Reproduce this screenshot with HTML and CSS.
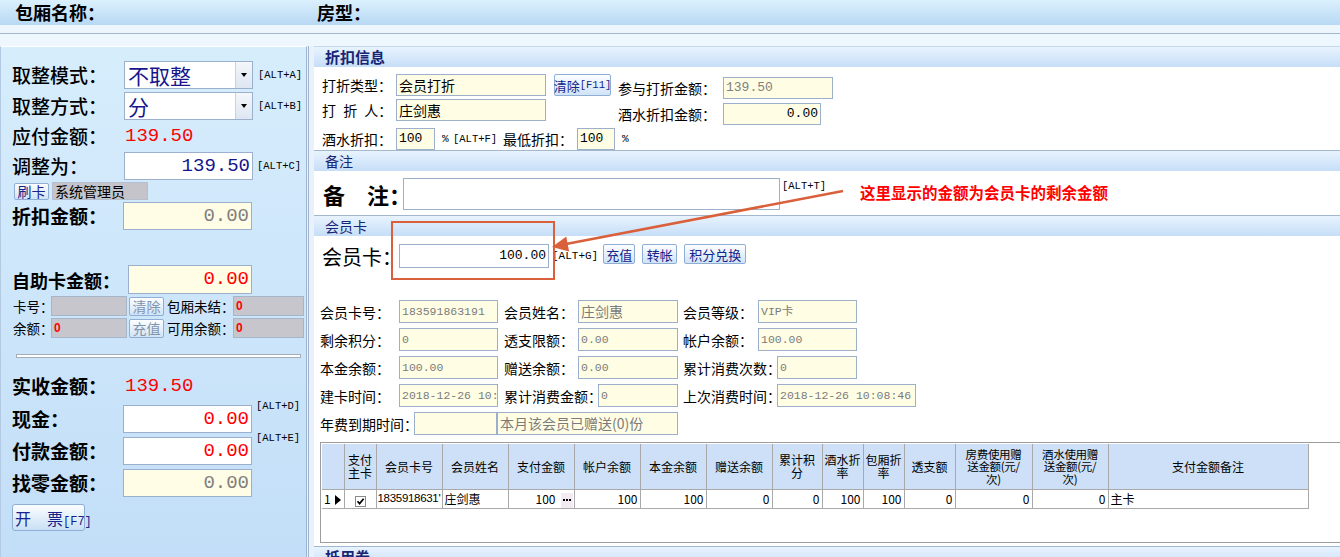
FILE: index.html
```html
<!DOCTYPE html>
<html lang="zh-CN">
<head>
<meta charset="utf-8">
<title>结账</title>
<link rel="stylesheet" href="styles.css">
</head>
<body>
<div class="app">
  <header class="titlebar">
    <span class="tt room-name">包厢名称：</span>
    <span class="tt room-type">房型：</span>
  </header>
  <div class="strip-a"></div>
  <div class="strip-b"></div>
  <div class="main">
    <aside class="left">
      <div class="lrow r1">
        <span class="lab med">取整模式：</span>
        <div class="sel"><span class="sel-val">不取整</span><span class="sel-btn"><i class="tri"></i></span></div>
        <span class="alt">[ALT+A]</span>
      </div>
      <div class="lrow r2">
        <span class="lab med">取整方式：</span>
        <div class="sel"><span class="sel-val">分</span><span class="sel-btn"><i class="tri"></i></span></div>
        <span class="alt">[ALT+B]</span>
      </div>
      <div class="lrow r3">
        <span class="lab med">应付金额：</span>
        <span class="num red val">139.50</span>
      </div>
      <div class="lrow r4">
        <span class="lab med">调整为：</span>
        <div class="bigin navy">139.50</div>
        <span class="alt alt-c">[ALT+C]</span>
      </div>
      <div class="lrow r5">
        <span class="btn swipe">刷卡</span>
        <span class="graybox op">系统管理员</span>
      </div>
      <div class="lrow r6">
        <span class="lab b w122">折扣金额：</span>
        <div class="bigin yel">0.00</div>
      </div>
      <div class="lrow r7">
        <span class="lab b w127 sm">自助卡金额：</span>
        <div class="bigin yel red w124">0.00</div>
      </div>
      <div class="lrow r8">
        <span class="slab w38">卡号：</span>
        <span class="gbox"></span>
        <span class="btn dim">清除</span>
        <span class="slab w66">包厢未结：</span>
        <span class="gbox w70"><b class="rz">0</b></span>
      </div>
      <div class="lrow r9">
        <span class="slab w38">余额：</span>
        <span class="gbox"><b class="rz">0</b></span>
        <span class="btn dim">充值</span>
        <span class="slab w66">可用余额：</span>
        <span class="gbox w70"><b class="rz">0</b></span>
      </div>
      <div class="sep"></div>
      <div class="lrow r10">
        <span class="lab b">实收金额：</span>
        <span class="num red val">139.50</span>
      </div>
      <div class="lrow r11">
        <span class="lab b w122">现金：</span>
        <div class="bigin red">0.00</div>
        <span class="alt alt-up">[ALT+D]</span>
      </div>
      <div class="lrow r12">
        <span class="lab b w122">付款金额：</span>
        <div class="bigin red">0.00</div>
        <span class="alt alt-up">[ALT+E]</span>
      </div>
      <div class="lrow r13">
        <span class="lab b w122">找零金额：</span>
        <div class="bigin yel">0.00</div>
      </div>
      <div class="lrow r14">
        <span class="btn invoice"><span class="inv-cn">开　票</span><span class="inv-k">[F7]</span></span>
      </div>
    </aside>
    <div class="divider"></div>
    <section class="right">
      <div class="sh b">折扣信息</div>
      <div class="sb1">
        <div class="disc-top">
          <div class="disc-left">
            <div class="drow">
              <span class="rl w74">打折类型：</span>
              <span class="f w150">会员打折</span>
              <span class="btn clr">清除<span class="k">[F11]</span></span>
            </div>
            <div class="drow">
              <span class="rl w74 spaced">打 折 人：</span>
              <span class="f w150">庄剑惠</span>
            </div>
          </div>
          <div class="disc-right">
            <div class="drow">
              <span class="rl w105">参与打折金额：</span>
              <span class="f w110 gray mono13">139.50</span>
            </div>
            <div class="drow">
              <span class="rl w105">酒水折扣金额：</span>
              <span class="f w98 ra mono13">0.00</span>
            </div>
          </div>
        </div>
        <div class="drow row3">
          <span class="rl w74">酒水折扣：</span>
          <span class="f w39 mono13">100</span>
          <span class="pct">%</span>
          <span class="alt w50 altf">[ALT+F]</span>
          <span class="rl w74">最低折扣：</span>
          <span class="f w38 mono13">100</span>
          <span class="pct">%</span>
        </div>
      </div>
      <div class="sh">备注</div>
      <div class="sb2">
        <span class="memo-l">备　注：</span>
        <span class="memo-f"></span>
        <span class="alt alt-t">[ALT+T]</span>
      </div>
      <div class="sh">会员卡</div>
      <div class="sb3">
        <div class="card-row">
          <span class="card-l">会员卡：</span>
          <span class="card-f">100.00</span>
          <span class="alt alt-g">[ALT+G]</span>
          <span class="btn cb1">充值</span>
          <span class="btn cb2">转帐</span>
          <span class="btn cb3">积分兑换</span>
        </div>
        <div class="mi">
          <div class="mrow">
            <span class="ml w79">会员卡号：</span><span class="mf w99 mono">183591863191</span>
            <span class="ml w74 ml6">会员姓名：</span><span class="mf w100 cn">庄剑惠</span>
            <span class="ml w75 ml5">会员等级：</span><span class="mf w99 mono">VIP卡</span>
          </div>
          <div class="mrow">
            <span class="ml w79">剩余积分：</span><span class="mf w99 mono">0</span>
            <span class="ml w74 ml6">透支限额：</span><span class="mf w100 mono">0.00</span>
            <span class="ml w75 ml5">帐户余额：</span><span class="mf w99 mono">100.00</span>
          </div>
          <div class="mrow">
            <span class="ml w79">本金余额：</span><span class="mf w99 mono">100.00</span>
            <span class="ml w74 ml6">赠送余额：</span><span class="mf w100 mono">0.00</span>
            <span class="ml w94 ml5">累计消费次数：</span><span class="mf w80 mono">0</span>
          </div>
          <div class="mrow">
            <span class="ml w79">建卡时间：</span><span class="mf w99 mono">2018-12-26 10:</span>
            <span class="ml w94 ml6">累计消费金额：</span><span class="mf w80 mono">0</span>
            <span class="ml w94 ml5">上次消费时间：</span><span class="mf w139 mono">2018-12-26 10:08:46</span>
          </div>
          <div class="mrow">
            <span class="ml w94">年费到期时间：</span><span class="mf w83"></span><span class="mf w181 cn">本月该会员已赠送(0)份</span>
          </div>
        </div>
        <div class="grid">
          <table class="gt">
            <colgroup>
              <col class="c22"><col class="c32"><col class="c66"><col class="c66"><col class="c66"><col class="c66"><col class="c66"><col class="c66"><col class="c50"><col class="c41"><col class="c41"><col class="c51"><col class="c77"><col class="c76"><col class="c200">
            </colgroup>
            <tr class="gh">
              <th></th><th>支付<br>主卡</th><th>会员卡号</th><th>会员姓名</th><th>支付金额</th><th>帐户余额</th><th>本金余额</th><th>赠送余额</th><th>累计积<br>分</th><th>酒水折<br>率</th><th>包厢折<br>率</th><th>透支额</th><th class="tight">房费使用赠<br>送金额(元/<br>次)</th><th class="tight">酒水使用赠<br>送金额(元/<br>次)</th><th>支付金额备注</th>
            </tr>
            <tr class="gd">
              <td class="rh">1<i class="ptr"></i></td>
              <td class="cc"><span class="chk"><svg width="9" height="9" viewBox="0 0 9 9"><path d="M1.5 4.2 L3.6 6.6 L7.6 1.8" fill="none" stroke="#000" stroke-width="1.7"/></svg></span></td>
              <td class="cardno">1835918631'</td>
              <td>庄剑惠</td>
              <td class="n pay">100<span class="dots"><i></i><i></i><i></i></span></td>
              <td class="n">100</td>
              <td class="n">100</td>
              <td class="n">0</td>
              <td class="n">0</td>
              <td class="n">100</td>
              <td class="n">100</td>
              <td class="n">0</td>
              <td class="n">0</td>
              <td class="n">0</td>
              <td>主卡</td>
            </tr>
          </table>
        </div>
      </div>
      <div class="sh b">抵用券</div>
    </section>
  </div>
  <div class="overlay">
    <svg class="anno" width="1340" height="557" viewBox="0 0 1340 557">
      <rect x="392" y="222" width="162" height="57" fill="none" stroke="#d9603b" stroke-width="2"/>
      <line x1="843" y1="191" x2="566" y2="244" stroke="#d9603b" stroke-width="2.5"/>
      <polygon points="552,247 569.1,251.4 566.3,236.6" fill="#d9603b"/>
    </svg>
    <div class="note">这里显示的金额为会员卡的剩余金额</div>
  </div>
</div>
</body>
</html>
```

FILE: styles.css
```css
* { box-sizing: border-box; }
html, body { margin: 0; padding: 0; }
body {
  width: 1340px; height: 557px; overflow: hidden;
  font-family: "Noto Sans CJK SC", "Noto Sans", sans-serif;
  color: #000; background: #eef6fe;
}
.app { position: relative; width: 1340px; height: 557px; overflow: hidden; display: flex; flex-direction: column; }

/* title */
.titlebar { height: 25px; flex: none; display: flex; align-items: center; background: linear-gradient(#dbf0fd, #b8d8f4); }
.tt { font-size: 18px; font-weight: 700; line-height: 22px; white-space: nowrap; margin-top: -2px; }
.room-name { width: 317px; padding-left: 15px; flex: none; }
.strip-a { height: 9px; flex: none; background: #edf5fd; border-bottom: 1px solid #a3b7cf; }
.strip-b { height: 12px; flex: none; background: #eef6fe; }

.main { flex: 1; display: flex; min-height: 0; }

/* left panel */
.left {
  width: 307px; flex: none;
  border-left: 1px solid #b4c9e2; border-right: 1px solid #9fb4cf; border-top: 1px solid #fff;
  background: linear-gradient(#d6edfc, #c3def8);
  display: flex; flex-direction: column;
}
.divider { width: 7px; flex: none; background: linear-gradient(to right, #eaf3fd 0, #eaf3fd 1px, #9fb4cf 1px, #9fb4cf 2px, #e9f2fc 2px); }

.lrow { display: flex; align-items: center; flex: none; height: 28px; }
.r1 { margin-top: 14px; }
.r2 { margin-top: 3px; }
.r3 { margin-top: 2px; }
.r4 { margin-top: 2px; }
.r5 { margin-top: 2px; height: 18px; }
.r6 { margin-top: 2px; }
.r7 { margin-top: 35px; height: 29px; }
.r8 { margin-top: 2px; height: 20px; }
.r9 { margin-top: 2px; height: 20px; }
.r10 { margin-top: 14px; }
.r11 { margin-top: 5px; }
.r12 { margin-top: 4px; }
.r13 { margin-top: 4px; }
.r14 { margin-top: 7px; height: 27px; }

.lab { flex: none; width: 123px; padding-left: 11px; font-size: 19px; white-space: nowrap; line-height: 24px; }
.lab.med { font-weight: 500; }
.lab.b { font-weight: 700; }
.lab.sm { font-size: 18px; }
.lab.w122 { width: 122px; }
.lab.w127 { width: 127px; }

.sel { width: 129px; height: 28px; border: 1px solid #9ab0cc; background: #fff; display: flex; flex: none; }
.sel-val { flex: 1; font-size: 21px; color: #17168c; padding-left: 3px; line-height: 26px; }
.sel-btn { width: 17px; border-left: 1px solid #c4d2e3; background: linear-gradient(#f4f7fb, #dde6f2); display: flex; align-items: center; justify-content: center; }
.tri { display: block; width: 0; height: 0; border-left: 3.5px solid transparent; border-right: 3.5px solid transparent; border-top: 4px solid #000; }

.alt { font-family: "Liberation Mono", monospace; font-size: 10.5px; margin-left: 5px; white-space: nowrap; flex: none; line-height: 12px; }
.alt-c { margin-left: 4px; }
.alt-up { align-self: flex-start; margin-top: -5px; margin-left: 4px; }

.num { font-family: "Liberation Mono", monospace; font-size: 19px; }
.red { color: #f00; }
.val { margin-left: 1px; }

.bigin {
  flex: none; width: 129px; height: 28px; border: 1px solid #9ab0cc; background: #fff;
  font-family: "Liberation Mono", monospace; font-size: 19px; line-height: 26px;
  text-align: right; padding-right: 2px; color: #14148c;
}
.bigin.yel { background: #fffde6; color: #7f7f7f; }
.bigin.red { color: #f00; }
.bigin.w124 { width: 124px; height: 29px; }

.btn {
  flex: none; display: flex; align-items: center; justify-content: center; white-space: nowrap;
  border: 1px solid #8eaed3; border-radius: 2px;
  background: linear-gradient(#fdfeff, #d0e3f7); color: #16238c; font-size: 13px;
}
.swipe { margin-left: 13px; width: 35px; height: 17px; font-size: 14px; }
.graybox { flex: none; background: #c4c4ca; border: 1px solid #b3bfce; height: 18px; font-size: 14px; line-height: 16px; padding-left: 2px; }
.op { margin-left: 3px; width: 96px; }

.slab { flex: none; font-size: 13.5px; white-space: nowrap; padding-left: 12px; }
.slab.w38 { width: 50px; }
.slab.w66 { width: 69px; padding-left: 3px; }
.gbox { flex: none; width: 76px; height: 20px; background: #c6c6cc; border: 1px solid #a6b6ca; display: flex; align-items: center; padding-left: 2px; }
.gbox.w70 { width: 71px; }
.rz { color: #f00; font-family: "Liberation Sans", sans-serif; font-size: 12px; font-weight: 700; }
.btn.dim { margin-left: 2px; width: 35px; height: 19px; color: #8393aa; font-size: 14px; }

.sep { flex: none; margin: 16px 0 0 15px; width: 285px; height: 4px; border: 1px solid #a3adbc; background: #fff; }

.invoice { margin-left: 11px; width: 73px; height: 27px; border-radius: 3px; justify-content: flex-start; align-items: baseline; padding: 3px 0 0 2px; background: linear-gradient(#fbfdff 0, #e5f0fa 45%, #c9e0f5 100%); }
.inv-cn { font-size: 16px; line-height: 20px; }
.inv-k { font-family: "Liberation Mono", monospace; font-size: 12px; }

/* right panel */
.right { flex: 1; min-width: 0; background: #fff; display: flex; flex-direction: column; border-top: 1px solid #c6d7ea; }
.sh { height: 20px; flex: none; background: linear-gradient(#e8f3fe, #c6def8); color: #172574; font-size: 14px; padding-left: 11px; line-height: 20px; white-space: nowrap; }
.sh.b { font-weight: 700; font-size: 15px; }

.sb1 { height: 84px; flex: none; border-bottom: 1px solid #a3b7cf; padding: 7px 0 0 8px; }
.disc-top { display: flex; }
.disc-left { width: 296px; flex: none; display: flex; flex-direction: column; gap: 3px; }
.disc-right { margin-top: 3px; display: flex; flex-direction: column; gap: 4px; }
.drow { display: flex; align-items: center; height: 22px; }
.row3 { margin-top: 3px; }
.rl { flex: none; font-size: 14px; white-space: nowrap; }
.spaced { word-spacing: 4px; }
.w74 { width: 74px; }
.w105 { width: 105px; }
.f { flex: none; height: 22px; border: 1px solid #9cb0cc; background: #fffee5; font-size: 14px; line-height: 20px; padding: 0 2px; white-space: nowrap; overflow: hidden; }
.w150 { width: 150px; }
.w110 { width: 110px; }
.w98 { width: 98px; }
.w39 { width: 39px; }
.w38 { width: 38px; }
.w50 { width: 50px; }
.gray { color: #808080; }
.ra { text-align: right; }
.mono13 { font-family: "Liberation Mono", monospace; font-size: 13px; }
.clr { margin-left: 8px; width: 57px; height: 22px; font-size: 13px; }
.k { font-family: "Liberation Mono", monospace; font-size: 10.5px; }
.pct { flex: none; width: 11px; margin-left: 7px; font-family: "Liberation Mono", monospace; font-size: 11px; }
.altf { margin-left: 0; }

.sb2 { height: 45px; flex: none; border-bottom: 1px solid #a3b7cf; display: flex; align-items: flex-start; padding: 7px 0 0 9px; }
.memo-l { flex: none; width: 80px; font-size: 22px; font-weight: 700; line-height: 32px; white-space: nowrap; }
.memo-f { flex: none; width: 377px; height: 32px; border: 1px solid #9cb0cc; background: #fff; }
.alt-t { margin: 2px 0 0 2px; }

.sb3 { height: 311px; flex: none; border-bottom: 1px solid #a3b7cf; display: flex; flex-direction: column; }
.card-row { display: flex; align-items: center; height: 24px; margin: 8px 0 0 8px; flex: none; }
.card-l { flex: none; width: 77px; font-size: 20px; white-space: nowrap; }
.card-f { flex: none; width: 150px; height: 24px; border: 1px solid #9cb0cc; background: #fff; text-align: right; font-family: "Liberation Mono", monospace; font-size: 13px; line-height: 22px; padding-right: 2px; }
.alt-g { margin-left: 3px; font-size: 11px; }
.cb1 { margin-left: 5px; width: 32px; height: 20px; align-self: flex-start; }
.cb2 { margin-left: 7px; width: 35px; height: 20px; align-self: flex-start; }
.cb3 { margin-left: 7px; width: 62px; height: 20px; align-self: flex-start; }

.mi { display: flex; flex-direction: column; gap: 5px; margin: 32px 0 0 6px; flex: none; }
.mrow { display: flex; align-items: center; height: 23px; }
.ml { flex: none; font-size: 14px; white-space: nowrap; }
.mf { flex: none; height: 23px; border: 1px solid #9cb0cc; background: #fffee5; color: #7b7b7b; font-size: 13px; line-height: 21px; padding-left: 2px; overflow: hidden; white-space: nowrap; }
.mf.mono { font-family: "Liberation Mono", "Noto Sans CJK SC", monospace; font-size: 11.5px; }
.mf.cn { font-size: 14px; }
.w79 { width: 79px; }
.w99 { width: 99px; }
.w100 { width: 100px; }
.w75 { width: 75px; }
.w94 { width: 94px; }
.w80 { width: 80px; }
.w139 { width: 139px; }
.w83 { width: 83px; }
.w181 { width: 181px; }
.ml6 { margin-left: 6px; }
.ml5 { margin-left: 5px; }

.grid { flex: none; margin: 7px 0 0 6px; height: 101px; border: 1px solid #9c9c9c; border-right: 0; background: #fff; padding: 1px 0 0 1px; overflow: hidden; }
.gt { border-collapse: collapse; table-layout: fixed; width: 986px; font-size: 12px; }
.c22 { width: 22px; } .c32 { width: 32px; } .c66 { width: 66px; } .c50 { width: 50px; }
.c41 { width: 41px; } .c51 { width: 51px; } .c77 { width: 77px; } .c76 { width: 76px; } .c200 { width: 200px; }
.gt th, .gt td { border: 1px solid #a9a9a9; padding: 0 2px; overflow: hidden; white-space: nowrap; }
.gt tr:first-child th { border-top: 0; }
.gt th:first-child, .gt td:first-child { border-left: 0; }
.gh th { height: 45px; background: #cde0f7; font-weight: 400; line-height: 13px; text-align: center; white-space: normal; padding: 0 1px; }
.gh th.tight { font-size: 11.5px; line-height: 12.5px; letter-spacing: -0.3px; }
.gd td { height: 19px; line-height: 17px; vertical-align: middle; }
.gd td.n { text-align: right; }
.gd td.pay { padding-right: 1px; }
.gd td.cardno { padding: 0 0 0 1px; font-family: "Liberation Sans", sans-serif; font-size: 11.5px; letter-spacing: -0.3px; }
.rh { padding-left: 1px; }
.rh .ptr { display: inline-block; margin-left: 4px; width: 0; height: 0; border-top: 5px solid transparent; border-bottom: 5px solid transparent; border-left: 6px solid #000; vertical-align: -1px; }
.cc { text-align: center; }
.chk { display: inline-flex; width: 11px; height: 11px; border: 1px solid #8a8a8a; background: #fff; align-items: center; justify-content: center; vertical-align: -2px; }
.dots { display: inline-block; width: 12px; height: 15px; margin-left: 5px; background: #f2ecf2; vertical-align: middle; text-align: center; line-height: 15px; font-size: 0; }
.dots i { display: inline-block; width: 2px; height: 2px; margin: 0 0.5px; background: #000; vertical-align: middle; }

/* annotation overlay */
.overlay { position: absolute; left: 0; top: 0; width: 1340px; height: 557px; pointer-events: none; }
.anno { position: absolute; left: 0; top: 0; }
.note { position: absolute; left: 860px; top: 181px; color: #f00; font-weight: 700; font-size: 15.5px; white-space: nowrap; }
```
